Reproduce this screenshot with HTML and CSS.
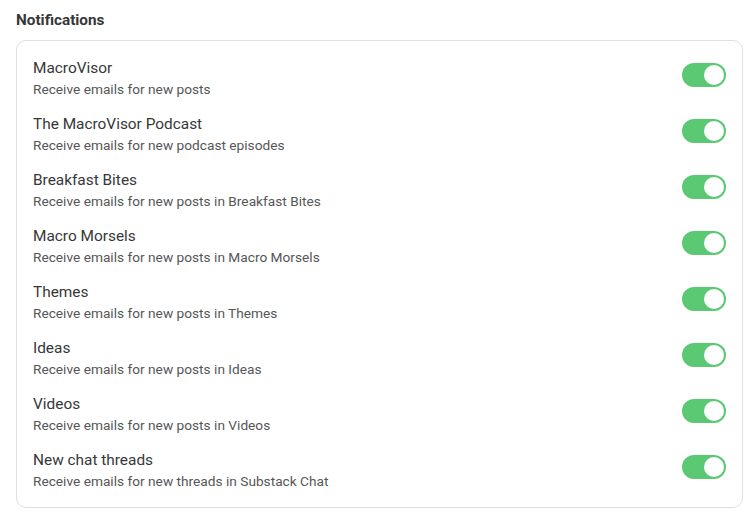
FILE: index.html
```html
<!DOCTYPE html>
<html>
<head>
<meta charset="utf-8">
<link rel="stylesheet" href="styles.css">
</head>
<body>
<div class="page">
  <h2 class="heading">Notifications</h2>
  <div class="card">
    <div class="row"><div class="text"><div class="name">MacroVisor</div><div class="desc">Receive emails for new posts</div></div><span class="toggle"><span class="knob"></span></span></div>
    <div class="row"><div class="text"><div class="name">The MacroVisor Podcast</div><div class="desc">Receive emails for new podcast episodes</div></div><span class="toggle"><span class="knob"></span></span></div>
    <div class="row"><div class="text"><div class="name">Breakfast Bites</div><div class="desc">Receive emails for new posts in Breakfast Bites</div></div><span class="toggle"><span class="knob"></span></span></div>
    <div class="row"><div class="text"><div class="name">Macro Morsels</div><div class="desc">Receive emails for new posts in Macro Morsels</div></div><span class="toggle"><span class="knob"></span></span></div>
    <div class="row"><div class="text"><div class="name">Themes</div><div class="desc">Receive emails for new posts in Themes</div></div><span class="toggle"><span class="knob"></span></span></div>
    <div class="row"><div class="text"><div class="name">Ideas</div><div class="desc">Receive emails for new posts in Ideas</div></div><span class="toggle"><span class="knob"></span></span></div>
    <div class="row"><div class="text"><div class="name">Videos</div><div class="desc">Receive emails for new posts in Videos</div></div><span class="toggle"><span class="knob"></span></span></div>
    <div class="row"><div class="text"><div class="name">New chat threads</div><div class="desc">Receive emails for new threads in Substack Chat</div></div><span class="toggle"><span class="knob"></span></span></div>
  </div>
</div>
</body>
</html>
```
FILE: styles.css
```css
html, body {
  margin: 0;
  padding: 0;
  background: #ffffff;
}
body {
  font-family: Roboto, "Liberation Sans", sans-serif;
  color: #363737;
}
.page {
  padding: 10px 9px 0 16px;
}
.heading {
  margin: 0;
  font-size: 15.3px;
  line-height: 20px;
  font-weight: 700;
  color: #363737;
}
.card {
  margin-top: 10px;
  border: 1px solid #e0e0e0;
  border-radius: 10px;
  padding: 16px 16px 16px 16px;
  display: flex;
  flex-direction: column;
  gap: 14px;
}
.row {
  display: flex;
  justify-content: space-between;
  align-items: flex-start;
}
.name {
  font-size: 15.4px;
  line-height: 22px;
  color: #363737;
}
.desc {
  font-size: 13.7px;
  line-height: 20px;
  color: #565656;
}
.toggle {
  margin-top: 6px;
  width: 44px;
  height: 24px;
  border-radius: 12px;
  background: #5bc974;
  display: flex;
  align-items: center;
  justify-content: flex-end;
  padding: 0 2px;
  box-sizing: border-box;
}
.knob {
  width: 20px;
  height: 20px;
  border-radius: 50%;
  background: #ffffff;
}
```
